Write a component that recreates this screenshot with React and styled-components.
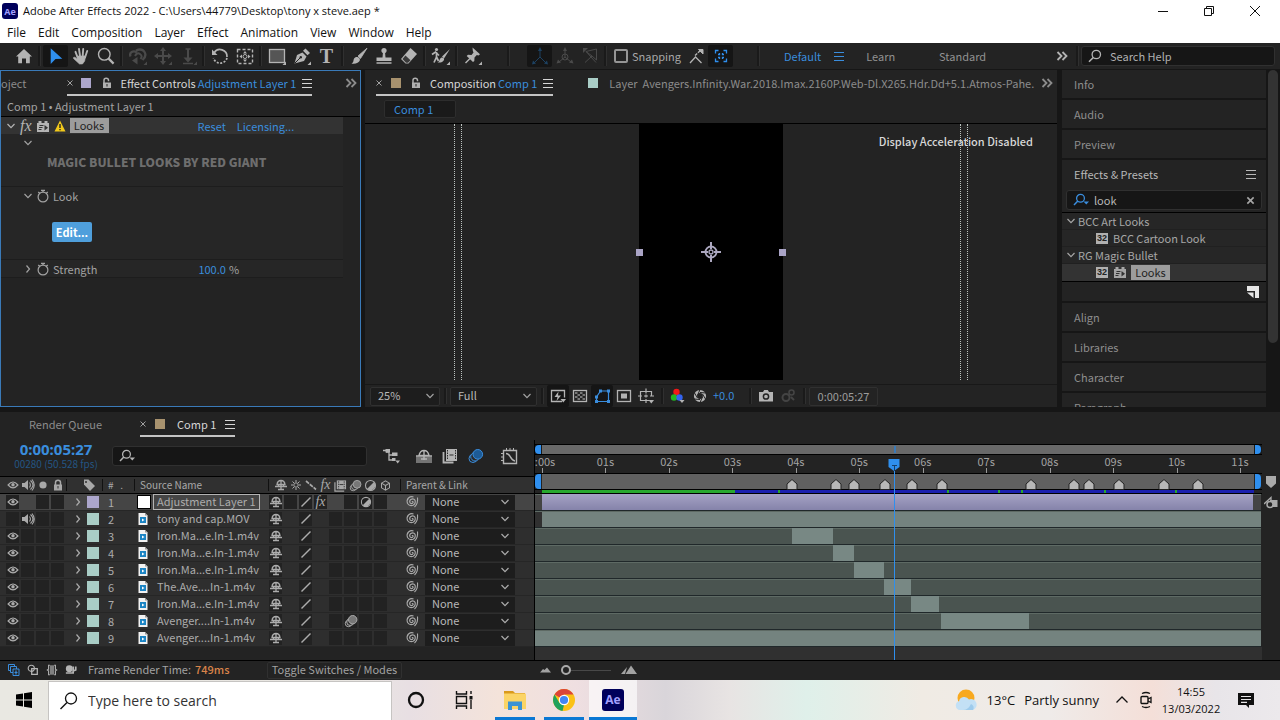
import React from 'react'
import styled, { createGlobalStyle, css } from 'styled-components'

const GlobalStyle = createGlobalStyle`
  * {
    box-sizing: border-box;
  }

  body {
    margin: 0;
    background: #161616;
    color: #a2a2a2;
    font: 11px/16px 'Noto Sans CJK JP', 'Noto Sans', sans-serif;
  }

  button, input, select {
    margin: 0;
    padding: 0;
    border: 0;
    background: none;
    color: inherit;
    font: inherit;
    outline: none;
  }

  svg {
    display: block;
    flex: none;
  }
`

const blue = '#3a8ddd'
const duration = 11.22
const at = seconds => `${(seconds / duration) * 100}%`

/* ---------- icons ---------- */

const corner = <path d="M19 15.5V19h-3.500z" fill="currentColor" stroke="none" />

const glyphs = {
  home: [20, <path d="M10 3 2 10.500h2.200v6.800H8v-4.800h4v4.800h3.800v-6.800H18z" fill="currentColor" stroke="none" />],
  arrow: [20, <path d="M4.700 2.300 16.300 12.700l-6.800.3-4.800 5z" fill="currentColor" stroke="none" />],
  hand: [20, <g strokeLinecap="round"><path d="M6.800 12 4.500 5.800M9 10 8 3M11.700 10l.5-7M14 11.500l2.200-6.500" strokeWidth="1.900" /><path d="M6.500 10h8l-.8 5-2.200 3H8.500L2.500 12.500q-.5-1.500 1.300-1.300L6.500 13z" fill="currentColor" strokeWidth=".6" /></g>],
  zoom: [20, <><circle cx="8.300" cy="8.300" r="5.800" strokeWidth="1.400" /><path d="m12.600 12.600 5 5" strokeWidth="2.200" /></>],
  orbit: [20, <><path d="M2.500 10.500C1 6.500 5 4 9 6.500M8 4.500q6-2.500 8.500 1.500t-2 8" strokeWidth="2.300" /><path d="M7 10q2-4 5-2t.5 5" strokeWidth="2" /><path d="M9.500 11v7.500L4 14.500z" fill="currentColor" stroke="none" />{corner}</>],
  pan: [20, <><path d="M10 3v14M3 10h14" strokeWidth="2" /><path d="m10 1-3 4h6zM10 19l-3-4h6zM1 10l4-3v6zM19 10l-4-3v6z" fill="currentColor" stroke="none" />{corner}</>],
  dolly: [20, <><path d="M10 3v9" strokeWidth="2" /><path d="M7.500 3h5M5 17.500h10" strokeWidth="1.400" /><path d="m10 16.500-4.500-5h9z" fill="currentColor" stroke="none" />{corner}</>],
  rotate: [20, <><path d="M4 7a7 7 0 0 1 13 4" strokeWidth="1.700" /><path d="M17 12a7 7 0 0 1-13.500 0" strokeWidth="1.700" strokeDasharray="2 1.500" /><path d="M2 3.500V9h5.500z" fill="currentColor" stroke="none" /></>],
  anchorTool: [20, <><rect x="2.500" y="3.500" width="15" height="14" strokeDasharray="3 2" strokeWidth="1.400" /><circle cx="10" cy="10.500" r="2" /><path d="m10 5-2 2.500h4zM10 16l-2-2.500h4zM4.500 10.500l2.500-2v4zM15.500 10.500l-2.500-2v4z" fill="currentColor" stroke="none" /></>],
  shape: [20, <><rect x="2.500" y="3.500" width="15" height="13" fill="#555" strokeWidth="1.300" />{corner}</>],
  pen: [20, <><path d="M2.500 17.500 5 9l5.500-2.500 4 4-2.500 4.500z" fill="currentColor" stroke="none" /><path d="m3 17 5-5" stroke="#232323" /><circle cx="8.800" cy="11.300" r="1.200" fill="#232323" stroke="none" /><path d="m11 4.800 2.500-2.300 4.500 4.500-2.500 2.300z" fill="currentColor" stroke="none" />{corner}</>],
  brush: [20, <><path d="M18 2.200 9 10l2.500 2.500z" fill="currentColor" strokeWidth=".8" /><path d="M8.300 11c2 .3 3 1.700 2.500 3.500-.8 2.500-4.500 3.700-8.300 3 2.500-1 1.500-2.500 2.500-4.700.7-1.400 2-2 3.300-1.800z" fill="currentColor" stroke="none" /></>],
  stamp: [20, <><circle cx="10" cy="4.500" r="2.600" fill="currentColor" stroke="none" /><path d="M9 6h2l.5 5.500h6V15h-15v-3.500h6zM2.500 16.300h15v1.500h-15z" fill="currentColor" stroke="none" /></>],
  eraser: [20, <><path d="m11.500 2 6.500 6-8.500 9.500H6.500L2 13z" fill="currentColor" stroke="none" /><path d="m6.500 9.500 5 4.800-2.500 2.500H7L3.500 13z" fill="#3a3a3a" stroke="none" /></>],
  roto: [20, <><circle cx="5.500" cy="3.500" r="1.600" fill="currentColor" stroke="none" /><path d="M1 8.500 4.500 6 8 9.500M5.500 6v5l-2.500 5.500M5.500 11l2 4" strokeWidth="1.700" /><path d="m19 3-8 7.500 2 2zM10.500 11.500q3 0 2.500 2.500-1.500 3-6.500 2.500 1.800-.7 2-2.500 .5-2 2-2.500z" fill="currentColor" stroke="none" />{corner}</>],
  pin: [20, <><path d="m9.500 1.500 7.500 6.800-1.500 1.200-1.700-.4-2.300 2.400-.2 3.500-1.300 1-6.300-6 1.300-1.200 3.500.2 2-2.500-.7-1.800z" fill="currentColor" stroke="none" /><path d="M7 12.500 2.500 17" strokeWidth="1.500" />{corner}</>],
  axisLocal: [20, <><path d="M10 4v7l-6 6M10 11l6 6" /><path d="m10 1-2 4h4zM2 18.500l1-4 3 3zM18 18.500l-1-4-3 3z" fill="currentColor" stroke="none" /></>],
  axisWorld: [20, <><circle cx="10" cy="11" r="3" /><path d="M10 4v7l-6 5M10 11l6 5" /><path d="m10 1-2 4h4zM1.500 17.500l1.500-4 3 3zM18.500 17.500l-1.500-4-3 3z" fill="currentColor" stroke="none" /></>],
  axisView: [20, <><path d="M6 5.500 16.500 3v11L12 10zM6 5.500l10 11M5 16.500l7-6.500" /><path d="M3 2v5l5-5z" fill="currentColor" stroke="none" /></>],
  snapEdge: [20, <><path d="M4 17l5.500-6 6 6" strokeWidth="1.300" /><path d="M9 9.500l6-5.500" strokeWidth="1.400" strokeDasharray="3 1" /><path d="M12.500 3.500H17V8z" fill="currentColor" strokeWidth="1" /></>],
  snapBox: [20, <path d="M4.500 7.500v-3h3M12.500 4.500h3v3M15.500 12.500v3h-3M7.500 15.500h-3v-3M8.500 7v1.500H7M11.500 7v1.500H13M8.500 13v-1.500H7M11.500 13v-1.500H13" strokeWidth="1.300" />],
  menu: [10, <path d="M0 1.500h10M0 5.500h10M0 9.500h10" />],
  more: [12, <path d="m1.500 2 4 4-4 4M6.500 2l4 4-4 4" strokeWidth="1.800" />],
  search: [14, <><circle cx="8.300" cy="5.500" r="4.200" strokeWidth="1.300" /><path d="M5.300 8.500 1 12.800" strokeWidth="1.600" /></>],
  searchMenu: [16, <><circle cx="7.500" cy="6.300" r="3.900" strokeWidth="1.300" /><path d="M4.800 9 1 13" strokeWidth="1.500" /><path d="M10.500 9.500H16l-2.700 3z" fill="currentColor" stroke="none" /></>],
  close: [8, <path d="m.5 1.500 5 5M5.500 1.500l-5 5" stroke="#a0a0a0" />],
  clear: [10, <path d="m1.500 1.500 7 7M8.500 1.500l-7 7" strokeWidth="1.800" />],
  lockOpen: [12, <g stroke="#b0b0b0"><path d="M3 6V3.200q0-2 2.200-2t2.300 2v1" strokeWidth="1.500" /><path d="M2 5.500h8v5.500H2z" fill="#b0b0b0" stroke="none" /><path d="M6 7v2.500" stroke="#232323" /></g>],
  lock: [12, <><path d="M3.500 6V3.500q0-2.300 2.500-2.300t2.500 2.300V6" strokeWidth="1.500" /><path d="M2 5.500h8v6H2z" fill="currentColor" stroke="none" /><path d="M6 7v2.500" stroke="#323232" /></>],
  down: [10, <path d="m1.500 3 3.500 3.700L8.500 3" strokeWidth="1.200" />],
  right: [10, <path d="m3.500 1.500 3 3.500-3 3.500" strokeWidth="1.200" />],
  block: [14, <><path d="M1 4h1.500V2h3v2h3V2h3v2H13v9H1z" fill="currentColor" stroke="none" /><path d="M3.500 6.500h4M3 8.500h3.500M2.500 10.500h3" stroke="#333" /><path d="M8.500 6v5.500L12 8.700z" fill="#333" stroke="none" /></>],
  warn: [12, <><path d="M6 .5 11.500 11.500H.5z" fill="#f2c91b" stroke="none" /><path d="M6 4v4M6 9v1.300" stroke="#222" strokeWidth="1.400" /></>],
  stopwatch: [14, <><circle cx="7" cy="8" r="4.900" strokeWidth="1.200" /><path d="M7 3V1.300M5 1.300h4M2.200 3l1.600 1.300M11.800 3l-1.600 1.300" strokeWidth="1.200" /></>],
  newBin: [14, <><path d="M1 1h12v12H9V6H1z" fill="#e6e6e6" stroke="none" /><path d="M1 7.500h6.500V13z" fill="#e6e6e6" stroke="none" /></>],
  fast: [16, <><path d="M12 13.500H1.500v-11h13v7" strokeWidth="1.300" /><path d="M8.500 3.500 4.500 9h3l-1 4 4.500-5.500H8z" fill="currentColor" stroke="none" /><path d="M10.500 11H16l-2.700 3.500z" fill="currentColor" stroke="none" /></>],
  checker: [16, <><rect x="1.500" y="2.500" width="13" height="11" strokeWidth="1.300" /><path d="M3 4h2.500v2H3zM8 4h2.500v2H8zM5.500 6H8v2H5.500zM10.500 6H13v2h-2.500zM3 8h2.500v2H3zM8 8h2.500v2H8zM5.500 10H8v2H5.500zM10.500 10H13v2h-2.500z" fill="#777" stroke="none" /></>],
  mask: [16, <><path d="M2.500 13.500V9l4-6h8v10.500z" strokeWidth="1.200" /><path d="M1 12h3v3H1zM1 7.500h3v3H1zM5 1.500h3v3H5zM13 1.500h3v3h-3zM13 12h3v3h-3z" fill="currentColor" stroke="none" /></>],
  roi: [16, <><rect x="1.500" y="2.500" width="13" height="11" strokeWidth="1.300" /><path d="M5 5.500h6v5H5z" fill="currentColor" stroke="none" /></>],
  guides: [16, <><path d="M11 12.500H2.500v-9h11V8M8 .5v5M8 11v4M0 8h4M6 8h4M12 8h4M8 6.500v3" strokeWidth="1.200" /><path d="M10.500 12H16l-2.700 3.500z" fill="currentColor" stroke="none" /></>],
  rgb: [16, <><circle cx="6.500" cy="4" r="3.200" fill="#f01818" stroke="none" /><circle cx="4" cy="9.500" r="3.200" fill="#22b422" stroke="none" /><circle cx="9.500" cy="9.500" r="3.200" fill="#3464f0" stroke="none" /><path d="M9.500 12h5L12 15z" fill="currentColor" stroke="none" /></>],
  shutter: [16, <><circle cx="8" cy="8" r="4.500" strokeWidth="3.200" /><path d="m8 1.500-2.500 6M14 5 8 4.500M13.500 11l-3-5M8 14.500l2.500-5.500M2 11l6 .5M2.500 5l3 5" stroke="#232323" /></>],
  camera: [16, <><path d="M1 4h4l1.200-2h3.600L11 4h4v9.500H1z" fill="currentColor" stroke="none" /><circle cx="8" cy="8.500" r="2.600" stroke="#232323" strokeWidth="1.500" /></>],
  ghost: [16, <><circle cx="6" cy="9.500" r="3.500" strokeWidth="2" /><circle cx="11.500" cy="4.500" r="2.500" strokeWidth="1.600" /><path d="M11 9l3 3" strokeWidth="2" /></>],
  flow: [18, <><path d="M1 3.500h4M4 5h3v3h3M7 8v5h3" strokeWidth="1.300" /><path d="M3.500 2H8v3.500H3.500zM10 5.500h5.500V9H10zM10 11h3.500v3H10zM13.500 13.500H18l-2.300 3z" fill="currentColor" stroke="none" /></>],
  shyBig: [18, <><path d="M1 9.500h16V16H1z" fill="#747474" stroke="none" /><path d="M4 8.500q1-5 5-5t5 5zM9 3v10M6 12h6M1 9h16" strokeWidth="1.400" /></>],
  film: [16, <><path d="M1.500 4v10.500h10" strokeWidth="1.800" /><path d="M4 1h11v12H4z" fill="currentColor" stroke="none" /><path d="M5.500 2v10M13.500 2v10" stroke="#2b2b2b" strokeWidth="1" strokeDasharray="1.500 1" /><path d="M7.500 7h4" stroke="#2b2b2b" /></>],
  blur: [16, <><circle cx="5" cy="10.500" r="4" /><circle cx="7" cy="8.700" r="4.300" fill="#2b2b2b" /><circle cx="9.800" cy="6.300" r="4.800" fill="#1d5b96" /></>],
  blurGrey: [14, <><circle cx="4.500" cy="9.500" r="3.200" /><circle cx="6.200" cy="8" r="3.500" fill="#333" /><circle cx="8.700" cy="5.700" r="4.200" fill="#777" /></>],
  graph: [18, <><path d="M2.500 3.500h13v13h-13z" strokeWidth="1.400" /><path d="M5.500 1v2M9 1v2M12.500 1v2M0 6.500h2M0 10h2M0 13.500h2" /><path d="M5 6.500c5 0 4 7 9 7.500" strokeWidth="1.500" /></>],
  eye: [14, <><path d="M1.300 7Q7 0 12.700 7 7 13.500 1.300 7z" strokeWidth="1.400" /><circle cx="7" cy="6.700" r="2" fill="currentColor" stroke="none" /></>],
  speaker: [14, <><path d="M1 5h2.500L7 2v10L3.500 9H1z" fill="currentColor" stroke="none" /><path d="M8.500 4.500q1.800 2.500 0 5M9.500 2.500q5 4.500 0 9M11 1.500q4.500 5.500 0 11" strokeWidth="1.100" /></>],
  dot: [14, <circle cx="7" cy="7" r="3.600" fill="currentColor" stroke="none" />],
  tag: [14, <><path d="M2 1.500h4.500l6.500 6.500-5 5-6-6.500z" fill="currentColor" stroke="none" /><circle cx="4" cy="4" r="1" fill="#323232" stroke="none" /></>],
  shy: [14, <path d="M3 6.500q.5-4 4-4t4 4zM7 2.500V12M4 11.500h6M1 8.500h12M4.500 7v2M9.500 7v2" strokeWidth="1.300" />],
  sun: [14, <><circle cx="7" cy="7" r="2.200" /><path d="M7 2v2M7 10v2M2 7h2M10 7h2M3.500 3.500l1.500 1.500M9 9l1.500 1.500M10.500 3.500 9 5M5 9l-1.500 1.500" /></>],
  slash: [14, <path d="M2.500 11.500 11.500 2.500" strokeWidth="1.400" />],
  backslash: [14, <path d="m2 3 10 8.500" strokeWidth="1.700" strokeDasharray="4 1" />],
  filmSmall: [14, <><path d="M1 3.500v9.500h10" strokeWidth="1.300" /><path d="M3 1.500h10v9.500H3z" fill="currentColor" stroke="none" /><path d="M5 2.500v8M11 2.500v8" stroke="#333" strokeDasharray="1.500 1" /><path d="M6 6h4" stroke="#333" /></>],
  half: [14, <><circle cx="7" cy="7" r="5.400" strokeWidth="1.200" /><path d="M3.200 10.800A5.400 5.400 0 0 0 10.800 3.200z" fill="currentColor" stroke="none" /></>],
  cube: [14, <path d="m7 2 4.300 2.500v5L7 12 2.700 9.500v-5zM7 12V7L2.700 4.500M7 7l4.300-2.500" strokeWidth="1.100" />],
  whip: [14, <path d="M6.800 6.800q1.700-.6 1.200 1-1 1.500-2.700.3-1.500-2 .5-3.700 2.800-1.500 4.300 1 .8 3.200-2 4.800-3.500 1.300-5.600-1.700-1.200-3.200 1-5.500 2.500-2 5-1M12.500 2.500q.8 6-3 9.500" strokeWidth="1.100" />],
  file: [12, <><path d="M1.500 0H8l2.500 2.500V12h-9z" fill="#f2f2f2" stroke="none" /><path d="M8 0v2.500h2.500z" fill="#9a9a9a" stroke="none" /><path d="M3 4h6v6H3z" fill="#1b84c4" stroke="none" /><path d="M5 5.500v3L7.500 7z" fill="#fff" stroke="none" /></>],
  layers: [14, <><path d="M1.500 1.500h6v6h-6z" /><path d="M3.500 3.500h6v6h-6z" fill="#232323" /><path d="M6 6h6v6.500H6z" fill="#232323" /><path d="M9 7.500v4M7.500 9.500h3" strokeWidth="1.200" /></>],
  overlap: [14, <><circle cx="5" cy="5" r="3.600" strokeWidth="1.300" /><path d="M5.500 5.500H12V12H5.500z" strokeWidth="1.500" /></>],
  brackets: [14, <><path d="M4.500 1.500h5v11h-5z" fill="#808080" stroke="none" /><path d="M4.500 1.500H3V6L1.500 7 3 8v4.500h1.500M9.500 1.500H11V6l1.500 1L11 8v4.500H9.500" strokeWidth="1.200" /></>],
  snail: [14, <><circle cx="5" cy="5.500" r="4" fill="currentColor" stroke="none" /><path d="M1 10.500h8.500V3M9.500 8l3-1V3" strokeWidth="2" /></>],
  hillSmall: [12, <path d="M0 8.500 3 5l1.500 1L7 3.500l4 5z" fill="currentColor" stroke="none" />],
  hillBig: [18, <path d="M1 13 7 6 5 13zM5.500 13 11 4.500 17 13z" fill="currentColor" stroke="none" />],
  markerBin: [12, <path d="M1 0h10v7.500L6 12 1 7.500z" fill="currentColor" stroke="none" />],
  compButton: [14, <><path d="M6 4h7.500v7H6z" fill="currentColor" stroke="none" /><circle cx="6" cy="8.500" r="3" fill="#232323" strokeWidth="1.500" /><path d="M0 8 7 1.500V5" strokeWidth="1.300" /></>],
  anchor: [20, <g stroke="#aca8c0"><circle cx="10" cy="10" r="5.500" strokeWidth="1.800" /><path d="M10 0v7M10 13v7M0 10h7M13 10h7" strokeWidth="2" /><circle cx="10" cy="10" r="2" fill="#000" strokeWidth="1.300" /></g>],
  playhead: [12, <><path d="M.5 0h11v8L6 12 .5 8z" fill="#2f8fee" stroke="none" /><path d="M4 6.500h5M6.500 6.500V12" stroke="#16406c" /></>],
  workMarker: [12, <path d="M1 11.500V6l5-4.500L11 6v5.500z" fill="#b8b8b8" stroke="#222" />],
  minimize: [12, <path d="M1 6.500h10" />],
  restore: [12, <path d="M1.500 3.500h7v7h-7zM3.500 3.500v-2h7v7h-2" />],
  windowClose: [12, <path d="m1 1 10 10M11 1 1 11" />],
  windows: [18, <path d="M1 3.500 8 2.500v6H1zM9 2.300 17 1v7.500H9zM1 9.500h7v6L1 14.500zM9 9.500h8V17l-8-1.200z" fill="currentColor" stroke="none" />],
  taskSearch: [20, <><circle cx="12" cy="7.500" r="5.500" strokeWidth="1.300" /><path d="M8 11.500 1.500 18" strokeWidth="1.400" /></>],
  cortana: [18, <circle cx="9" cy="9" r="7" strokeWidth="2.300" />],
  taskView: [20, <><path d="M2.500 1v3h10V1M2.500 19v-3h10v3M2.500 6.500h10v7h-10zM17 1v3M17 10v9" strokeWidth="1.400" /><path d="M15.500 6h3v3.500h-3z" fill="currentColor" stroke="none" /></>],
  folder: [24, <><path d="M1 3h9l2 2h10v4H1z" fill="#d99a1c" stroke="none" /><path d="M1 5.500h21q1 0 1 1V21H1z" fill="#fbd466" stroke="none" /><path d="M5 13.500h14V22h-4v-4H9v4H5z" fill="#3c93d4" stroke="none" /></>],
  chrome: [24, <><circle cx="12" cy="12" r="11" fill="#fbc116" stroke="none" /><path d="M12 12 2.500 6.500A11 11 0 0 1 21.500 6.500H12z" fill="#dc4437" stroke="none" /><path d="M2.500 6.500 7.500 15 12 17l-1.500 5.900A11 11 0 0 1 2.500 6.500z" fill="#1fa15d" stroke="none" /><circle cx="12" cy="12" r="5.200" fill="#fff" stroke="none" /><circle cx="12" cy="12" r="4.100" fill="#4285f4" stroke="none" /></>],
  weather: [24, <><circle cx="12" cy="10" r="8.500" fill="#f8a91f" stroke="none" /><path d="M6 22a4.500 4.500 0 0 1-1-8.800 5.500 5.500 0 0 1 10-1.700 5 5 0 0 1 4 10.500z" fill="#c3e0f5" stroke="none" /><path d="M9 22q5 0 8-6a4 4 0 0 1 2 6z" fill="#9ecbec" stroke="none" /></>],
  up: [14, <path d="m1.500 9.500 5.500-5.500 5.500 5.500" strokeWidth="1.300" />],
  meet: [18, <><rect x="4" y="5.500" width="7" height="7" rx="1" strokeWidth="1.400" /><path d="m11 8 3-1.500v5L11 10M5 2.500q4-2 8 0M5 15.500q4 2 8 0" strokeWidth="1.300" /></>],
  notice: [18, <><path d="M1 2h16v12h-5v3l-3-3H1z" fill="currentColor" stroke="none" /><path d="M4 5.500h10M4 8.500h10M4 11.300h6" stroke="#e8e6e8" strokeWidth="1.200" /></>],
}

const Icon = ({ name, size }) => {
  const [box, drawing] = glyphs[name]
  return (
    <svg width={size || box} height={size || box} viewBox={`0 0 ${box} ${box}`} fill="none" stroke="currentColor" aria-hidden="true">
      {drawing}
    </svg>
  )
}

/* ---------- shell ---------- */

const App = styled.div`
  height: 100vh;
  min-height: 600px;
  display: flex;
  flex-direction: column;
  overflow: hidden;
`

const Windows = styled.div`
  background: #fff;
  color: #111;
  font-family: 'Open Sans', sans-serif;
  font-size: 12px;
`

const TitleBar = styled.header`
  height: 22px;
  padding: 0 2px;
  display: flex;
  align-items: center;
  font-size: 11px;
`

const AeLogo = styled.span`
  width: ${p => p.$size}px;
  height: ${p => p.$size}px;
  border-radius: 3px;
  background: #00005b;
  color: #a3a0ff;
  font: bold ${p => (p.$size > 16 ? 12 : 9)}px/1 'Open Sans', sans-serif;
  display: flex;
  align-items: center;
  justify-content: center;
`

const WindowTitle = styled.span`
  flex: 1;
  margin-left: 5px;
`

const WindowButton = styled.button`
  width: 46px;
  height: 22px;
  display: flex;
  align-items: center;
  justify-content: center;
`

const MenuBar = styled.nav`
  height: 21px;
  padding-left: 7px;
  display: flex;
  align-items: center;
  gap: 12px;
`

const Toolbar = styled.div`
  height: 27px;
  flex: none;
  padding-left: 11px;
  background: #232323;
  border-bottom: 1px solid #161616;
  display: flex;
  align-items: center;
  color: #a8a8a8;
`

const Tool = styled.button`
  width: ${p => p.$width || 25}px;
  height: 22px;
  flex: none;
  display: flex;
  align-items: center;
  justify-content: center;
  border-radius: 2px;
  color: ${p => p.$color || '#b4b4b4'};
  background: ${p => (p.$active ? '#151515' : 'none')};
`

const Letter = styled.span`
  font: bold 20px/20px 'Liberation Serif', serif;
`

const Divider = styled.span`
  width: ${p => p.$width || 7}px;
  height: ${p => p.$height || 20}px;
  flex: none;
  display: flex;
  justify-content: center;

  &::before {
    content: '';
    width: 2px;
    background: #1a1a1a;
    border-right: 1px solid #303030;
  }
`

const Space = styled.span`
  flex: ${p => (p.$width ? `0 0 ${p.$width}px` : 1)};
`

const SnapLabel = styled.label`
  display: flex;
  align-items: center;
  gap: 4px;
  margin: 0 2px 0 5px;
`

const Checkbox = styled.input`
  appearance: none;
  width: 14px;
  height: 14px;
  border: 2px solid #959595;
  border-radius: 2px;
`

const WorkspaceLink = styled.button`
  color: ${p => (p.$active ? blue : '#929292')};
`

const SearchBox = styled.label`
  height: 20px;
  padding: 0 6px;
  display: flex;
  align-items: center;
  gap: ${p => p.$gap || 5}px;
  background: #161616;
  border: 1px solid #303030;
  border-radius: 3px;
  color: #b4b4b4;

  input {
    flex: 1;
    min-width: 0;
    color: #b8b8b8;
  }

  input::placeholder {
    color: #b0b0b0;
    opacity: 1;
  }
`

const HelpSearch = styled(SearchBox)`
  width: 194px;
  margin-right: 5px;
`

const Workspace = styled.main`
  flex: 1;
  min-height: 0;
  display: flex;
  gap: 4px;
  margin-bottom: 5px;
`

const Panel = styled.section`
  background: #232323;
  display: flex;
  flex-direction: column;
  min-width: 0;
  min-height: 0;
`

/* ---------- tabs ---------- */

const Tabs = styled.div`
  height: ${p => p.$height}px;
  flex: none;
  display: flex;
  align-items: flex-end;
  padding-bottom: ${p => p.$bottom || 1}px;
  overflow: hidden;
  white-space: nowrap;
`

const Tab = styled.div`
  height: 25px;
  flex: none;
  display: flex;
  align-items: center;
  gap: ${p => p.$gap || 0}px;
  padding-top: 1px;
  color: ${p => (p.$active ? '#d6d6d6' : '#8c8c8c')};
  border-bottom: 2px solid ${p => (p.$active ? '#c4c4c4' : 'transparent')};
`

const TabLink = styled.span`
  color: ${blue};
  margin: 0 6px 0 2px;
`

const Swatch = styled.span`
  width: ${p => p.$size || 10}px;
  height: ${p => p.$size || 10}px;
  flex: none;
  background: ${p => p.$color};
`

const PlainButton = styled.button`
  display: flex;
  color: ${p => p.$color || '#a6a6a6'};
`

/* ---------- effect controls ---------- */

const EffectPanel = styled(Panel)`
  width: 361px;
  border: 1px solid #3a7ab8;
`

const Crumb = styled.div`
  height: 20px;
  padding: 1px 0 0 6px;
  border-bottom: 1px solid #000;
`

const EffectBody = styled.div`
  margin-right: 17px;
`

const EffectHead = styled.div`
  height: 17px;
  padding-left: 5px;
  display: flex;
  align-items: center;
  gap: 4px;
  background: #333;
  color: #b4b4b4;
`

const Fx = styled.span`
  font: italic ${p => p.$size || 16}px/14px 'Liberation Serif', serif;
`

const Highlight = styled.span`
  width: 39px;
  height: 15px;
  text-align: center;
  line-height: 14px;
  background: #9c9c9c;
  color: #222;
`

const LinkButton = styled.button`
  color: ${blue};
`

const PropBlock = styled.div`
  min-height: ${p => p.$height}px;
  padding-left: 22px;
  border-bottom: 1px solid #1d1d1d;
  background: #262626;
`

const PropRow = styled.div`
  height: 17px;
  display: flex;
  align-items: center;
  gap: 3px;
`

const Brand = styled.h2`
  margin: 1px 0 0 24px;
  font-size: 12px;
  line-height: 20px;
  font-weight: 900;
  color: #6e6e6e;
  text-transform: uppercase;
`

const EditButton = styled.button`
  margin: 18px 0 0 29px;
  height: 20px;
  width: 40px;
  border-radius: 2px;
  background: #4f9fdc;
  color: #fff;
  font-weight: bold;
`

/* ---------- composition ---------- */

const CompPanel = styled(Panel)`
  flex: 1;
`

const CompCrumb = styled.div`
  height: 27px;
  padding: 3px 0 0 19px;
  border-bottom: 1px solid #000;

  button {
    display: block;
    height: 18px;
    width: 72px;
    padding-left: 9px;
    text-align: left;
    line-height: 14px;
    background: #1a1a1a;
    border: 1px solid #2d2d2d;
    border-radius: 2px;
    color: ${blue};
  }
`

const Viewer = styled.div`
  flex: 1;
  position: relative;
  display: flex;
  justify-content: center;
  padding-bottom: 4px;
  border-bottom: 1px solid #181818;
`

const Frame = styled.div`
  width: 144px;
  background: #000;
  position: relative;
  display: flex;
  align-items: center;
  justify-content: center;
`

const Handle = styled.i`
  position: absolute;
  top: calc(50% - 3px);
  ${p => p.$side}: -3px;
  width: 7px;
  height: 7px;
  background: #aaa4c6;
`

const Guide = styled.i`
  position: absolute;
  top: 0;
  bottom: 4px;
  left: calc(50% + ${p => p.$x}px);
  border-left: 1px dotted #bcc4c0;
`

const ViewerNote = styled.strong`
  position: absolute;
  top: 9px;
  right: 24px;
  color: #d8d8d8;
  font-weight: 500;
`

const ViewerBar = styled.div`
  height: 22px;
  flex: none;
  padding-left: 5px;
  display: flex;
  align-items: center;
`

const SelectBox = styled.span`
  position: relative;
  display: flex;
  align-items: center;
  width: ${p => p.$width}px;
  height: ${p => p.$height || 19}px;
  background: #1d1d1d;
  ${p => p.$framed && css`
    border: 1px solid #303030;
    border-radius: 2px;
  `}

  select {
    appearance: none;
    flex: 1;
    height: 100%;
    padding: 0 0 2px 7px;
    line-height: 13px;
    color: #b8b8b8;
  }

  svg {
    position: absolute;
    right: ${p => (p.$framed ? 4 : 5)}px;
    pointer-events: none;
  }
`

const Exposure = styled.button`
  width: 34px;
  padding: 0 0 2px 2px;
  text-align: left;
  color: ${blue};
`

const TimeField = styled.button`
  width: 69px;
  height: 19px;
  padding-bottom: 2px;
  border: 1px solid #303030;
  border-radius: 2px;
  color: #9c9c9c;
`

/* ---------- side panel ---------- */

const Side = styled.aside`
  width: 219px;
  display: flex;
  overflow: hidden;
`

const SideList = styled.div`
  flex: 1;
  margin-left: 1px;
`

const SideRow = styled.div`
  height: ${p => (p.$open ? 28 : 30)}px;
  padding: 0 10px 1px 12px;
  display: flex;
  align-items: center;
  justify-content: space-between;
  background: #232323;
  border-bottom: ${p => (p.$open ? 0 : 2)}px solid #161616;
  color: ${p => (p.$open ? '#b8b8b8' : '#8e8e8e')};
`

const Presets = styled.div`
  background: #232323;
  border-bottom: 2px solid #161616;

  ${SearchBox} {
    margin: 2px 4px;
  }
`

const Tree = styled.div`
  border: solid #000;
  border-width: 1px 0;
`

const TreeRow = styled.div`
  height: 17px;
  padding-left: ${p => (p.$leaf ? 33 : 4)}px;
  display: flex;
  align-items: center;
  gap: ${p => (p.$leaf ? 4 : 2)}px;
  line-height: 14px;
  background: ${p => (p.$selected ? '#333' : '#262626')};
  border-bottom: 1px solid ${p => (p.$selected ? '#333' : '#202020')};
  color: #a6a6a6;
`

const Bits = styled.span`
  width: 12px;
  height: 11px;
  margin: 0 1px;
  font: bold 9px/11px 'Liberation Sans', sans-serif;
  text-align: center;
  background: #b0b0b0;
  color: #222;
`

const TreeFoot = styled.div`
  height: 19px;
  padding-right: 6px;
  display: flex;
  align-items: center;
  justify-content: flex-end;
`

const Scrollbar = styled.div`
  width: 14px;
  padding-left: 2px;

  &::before {
    content: '';
    display: block;
    width: 10px;
    height: 81%;
    background: #333;
    border-radius: 5px;
  }
`

/* ---------- timeline ---------- */

const Timeline = styled(Panel)`
  flex: none;
`

const TimelineBody = styled.div`
  display: flex;
`

const LayerSide = styled.div`
  width: 535px;
  flex: none;
  border-right: 1px solid #000;
`

const TimeHead = styled.div`
  height: 36px;
  display: flex;
  align-items: center;
  padding-bottom: 4px;
`

const Clock = styled.div`
  width: 112px;
  text-align: center;
  color: ${blue};

  strong {
    display: block;
    font: bold 15px/16px 'Noto Sans', sans-serif;
  }

  small {
    display: block;
    font-size: 10px;
    line-height: 14px;
    color: #235582;
  }
`

const LayerSearch = styled(SearchBox)`
  width: 255px;
  margin-right: 11px;
`

const LayerTable = styled.table`
  display: block;
  border-collapse: collapse;

  thead, tbody {
    display: block;
  }

  th, td {
    padding: 0;
    font-weight: normal;
    text-align: left;
    display: flex;
    align-items: center;
  }
`

const layerColumns = '60px 20px 16px 32px 134px 120px 37px 1fr'

const HeadRow = styled.tr`
  display: grid;
  grid-template-columns: 60px 36px 32px 134px 132px 1fr;
  height: 18px;
  padding-left: 6px;
  background: #303030;
  border: solid #000;
  border-width: 1px 0;
  font-size: 10px;
  color: #a8a8a8;

  th + th {
    border-left: 1px solid #111;
    padding-left: 5px;
    height: 12px;
    margin-top: 2px;
  }
`

const LayerRow = styled.tr`
  display: grid;
  grid-template-columns: ${layerColumns};
  height: 17px;
  padding-left: 6px;
  line-height: 14px;
  background: ${p => (p.$selected ? '#454545' : '#2e2e2e')};
  border-bottom: 1px solid #262626;
  color: #acacac;
`

const Cell = styled.span`
  width: 13px;
  height: 14px;
  margin-right: 2px;
  flex: none;
  display: flex;
  align-items: center;
  justify-content: center;
  background: ${p => (p.$dark ? '#222' : 'none')};
`

const SourceName = styled.span`
  height: 16px;
  padding: 0 3px;
  line-height: 13px;
  border: 1px solid ${p => (p.$selected ? '#b4b4b4' : 'transparent')};
  white-space: nowrap;
`

const Solid = styled.i`
  width: 14px;
  height: 14px;
  background: #fff;
  border: 1px solid #000;
`

const Thumb = styled.span`
  width: 16px;
  flex: none;
  display: flex;
  margin-left: 3px;
`

const Tracks = styled.div`
  flex: 1;
  min-width: 0;
  position: relative;
  padding-top: 4px;
  overflow: hidden;
  background: #232323;
`

const Strip = styled.div`
  height: ${p => p.$height}px;
  padding: 0 8px 0 7px;
  background: ${p => p.$color || 'none'};
  border-top: 1px solid #000;
`

const Span = styled.div`
  height: 100%;
  position: relative;
  background: ${p => p.$color || 'none'};
`

const End = styled.i`
  position: absolute;
  top: 0;
  bottom: 0;
  width: 6px;
  background: #2f8fee;
  ${p => (p.$left ? 'right: calc(100% + 1px)' : 'left: calc(100% + 1px)')};
  border-radius: ${p => (p.$left ? '4px 0 0 4px' : '0 4px 4px 0')};
`

const NavMark = styled.i`
  position: absolute;
  top: 1px;
  bottom: 1px;
  width: 2px;
  background: #3a7ab8;
`

const Tick = styled.span`
  position: absolute;
  bottom: 0;
  width: 40px;
  margin-left: -20px;
  height: 18px;
  text-align: center;
  line-height: 13px;

  &::after {
    content: '';
    position: absolute;
    left: 20px;
    bottom: 0;
    width: 1px;
    height: 5px;
    background: #9a9a9a;
  }
`

const Marker = styled.span`
  position: absolute;
  bottom: -1px;
  margin-left: -6px;
`

const Cached = styled.i`
  position: absolute;
  top: 0;
  bottom: 0;
  min-width: 2px;
  background: #28a82e;
`

const Lane = styled.div`
  height: 17px;
  padding: 0 8px 0 7px;
  margin-right: 1px;
  border-bottom: 1px solid #20282a;
  background: ${p => p.$color};
  box-shadow: inset 0 1px #5e6a64;
`

const Clip = styled.i`
  position: absolute;
  top: 0;
  bottom: 0;
  background: ${p => p.$fill};
`

const Remainder = styled.div`
  height: 13px;
  background: ${p => p.$color};
`

const PlayheadLayer = styled.div`
  position: absolute;
  inset: 19px 8px 0 7px;
  pointer-events: none;
`

const Playhead = styled.div`
  position: absolute;
  top: 0;
  bottom: 0;
  width: 12px;
  margin-left: -6px;

  &::after {
    content: '';
    position: absolute;
    left: 6px;
    top: 12px;
    bottom: 0;
    width: 1px;
    background: #2f8fee;
  }
`

const Gutter = styled.div`
  width: 18px;
  padding-top: 36px;
  display: flex;
  flex-direction: column;
  align-items: center;
  gap: 8px;
  color: #aaa;
`

const TimelineFoot = styled.div`
  height: 20px;
  padding: 0 0 1px 4px;
  display: flex;
  align-items: center;
  border-top: 1px solid #000;
`

const RenderTime = styled.span`
  margin-left: 8px;
  padding-bottom: 2px;
  width: 179px;

  b {
    margin-left: 4px;
    font-weight: 500;
    color: #d9834a;
  }
`

const ToggleButton = styled.button`
  width: 135px;
  height: 17px;
  line-height: 13px;
  padding-bottom: 2px;
  white-space: nowrap;
  border: 1px solid #303030;
  border-radius: 2px;
  margin-right: 138px;
`

const ZoomSlider = styled.input`
  appearance: none;
  width: 50px;
  height: 12px;
  margin: 0 9px;
  background: linear-gradient(#484848, #484848) center / 100% 1px no-repeat;

  &::-webkit-slider-thumb {
    appearance: none;
    width: 10px;
    height: 10px;
    border: 2px solid #aaa;
    border-radius: 50%;
    background: #232323;
  }
`

/* ---------- taskbar ---------- */

const Taskbar = styled.footer`
  height: 40px;
  flex: none;
  display: flex;
  align-items: center;
  font-family: 'Open Sans', sans-serif;
  color: #111;
  background: linear-gradient(90deg, #e9e8e2 0%, #e9e6e2 28%, #e8dfe3 32%, #f4e3da 39%, #efdfe1 45%, #d9d5da 52%, #e8e4e3 57%, #dff0ea 63%, #f0ebe4 72%, #efebe9 82%, #f4dfd8 90%, #e8e5e9 95%, #ece9ec 100%);
`

const StartButton = styled.button`
  width: 48px;
  height: 40px;
  display: flex;
  align-items: center;
  justify-content: center;
  color: #000;
`

const TaskSearch = styled.label`
  width: 344px;
  height: 39px;
  display: flex;
  align-items: center;
  gap: 9px;
  padding-left: 10px;
  background: #fff;
  border: 1px solid #c6c4c2;
  border-bottom: 0;
  font-size: 14px;

  input {
    flex: 1;
  }

  input::placeholder {
    color: #333;
    opacity: 1;
  }
`

const TaskButton = styled.button`
  width: ${p => (p.$running ? 40 : 48)}px;
  height: 40px;
  margin: 0 ${p => (p.$running ? 5 : 0)}px 0 ${p => (p.$running ? 4 : 0)}px;
  display: flex;
  align-items: center;
  justify-content: center;
  color: #111;
  box-shadow: ${p => (p.$running || p.$current ? 'inset 0 -3px #0a78d4' : 'none')};
  background: ${p => (p.$current ? 'rgba(255, 255, 255, .65)' : 'none')};
`

const Weather = styled.button`
  display: flex;
  align-items: center;
  gap: 9px;
  font-size: 13px;
  white-space: nowrap;
`

const TrayButton = styled.button`
  width: ${p => p.$width || 24}px;
  height: 40px;
  display: flex;
  align-items: center;
  justify-content: center;
`

const DateTime = styled.time`
  width: 66px;
  text-align: center;
  font-size: 11px;
  line-height: 17px;
`

/* ---------- data ---------- */

const menus = ['File', 'Edit', 'Composition', 'Layer', 'Effect', 'Animation', 'View', 'Window', 'Help']

const toolGroups = [
  ['home'],
  ['arrow', 'hand', 'zoom'],
  ['orbit', 'pan', 'dolly'],
  ['rotate', 'anchorTool'],
  ['shape', 'pen', 'type'],
  ['brush', 'stamp', 'eraser'],
  ['roto'],
  ['pin'],
]

const dimTools = ['orbit', 'pan', 'dolly']

const layers = [
  { name: 'Adjustment Layer 1', adjustment: true },
  { name: 'tony and cap.MOV', audio: true, full: true },
  { name: 'Iron.Ma...e.In-1.m4v', clip: [3.94, 4.6] },
  { name: 'Iron.Ma...e.In-1.m4v', clip: [4.59, 4.93] },
  { name: 'Iron.Ma...e.In-1.m4v', clip: [4.93, 5.39] },
  { name: 'The.Ave....In-1.m4v', clip: [5.39, 5.82] },
  { name: 'Iron.Ma...e.In-1.m4v', clip: [5.83, 6.27] },
  { name: 'Avenger....In-1.m4v', clip: [6.29, 7.68], blurred: true },
  { name: 'Avenger....In-1.m4v', full: true },
]

const seconds = ['0:00s', '01s', '02s', '03s', '04s', '05s', '06s', '07s', '08s', '09s', '10s', '11s']
const markers = [3.945, 4.626, 4.91, 5.41, 5.836, 6.296, 7.7, 8.376, 8.613, 9.086, 9.807, 10.33]
const cached = [3.72, 6.38, 7.18, 7.55, 8.86, 9.97]
const now = 5.547

/* ---------- parts ---------- */

const MainTools = () => (
  <Toolbar>
    {toolGroups.map((group, i) => (
      <React.Fragment key={i}>
        {i > 0 && <Divider />}
        {group.map(name => (
          <Tool
            key={name}
            aria-label={name}
            $active={name === 'arrow'}
            $color={name === 'arrow' ? '#2f8fee' : dimTools.includes(name) ? '#4a4a4a' : undefined}
          >
            {name === 'type' ? <Letter>T</Letter> : <Icon name={name} />}
          </Tool>
        ))}
      </React.Fragment>
    ))}
    <Space $width={20} />
    <Divider />
    <Space $width={15} />
    <Tool $active $color="#1d4161" aria-label="Local axis"><Icon name="axisLocal" /></Tool>
    <Tool $color="#4a4a4a" aria-label="World axis"><Icon name="axisWorld" /></Tool>
    <Tool $color="#4a4a4a" aria-label="View axis"><Icon name="axisView" /></Tool>
    <Divider />
    <SnapLabel>
      <Checkbox type="checkbox" />
      Snapping
    </SnapLabel>
    <Tool aria-label="Snap edges"><Icon name="snapEdge" /></Tool>
    <Tool $active $color="#2f8fee" aria-label="Snap box"><Icon name="snapBox" /></Tool>
    <Space $width={22} />
    <Divider />
    <Space $width={22} />
    <WorkspaceLink $active>Default</WorkspaceLink>
    <Space $width={13} />
    <Tool $width={10} $color={blue} aria-label="Workspace menu"><Icon name="menu" /></Tool>
    <Space $width={22} />
    <WorkspaceLink>Learn</WorkspaceLink>
    <Space $width={44} />
    <WorkspaceLink>Standard</WorkspaceLink>
    <Space />
    <Tool aria-label="More workspaces"><Icon name="more" /></Tool>
    <Divider />
    <HelpSearch $gap={8}>
      <Icon name="search" />
      <input placeholder="Search Help" aria-label="Search Help" />
    </HelpSearch>
  </Toolbar>
)

const EffectControls = () => (
  <EffectPanel>
    <Tabs $height={26}>
      <Tab>oject</Tab>
      <Space $width={41} />
      <Tab $active>
        <Icon name="close" />
        <Space $width={6} />
        <Swatch $color="#aca6cc" />
        <Space $width={10} />
        <Icon name="lockOpen" />
        <Space $width={7} />
        Effect Controls
        <TabLink>Adjustment Layer 1</TabLink>
        <Icon name="menu" />
      </Tab>
      <Space />
      <Tab><Icon name="more" /></Tab>
      <Space $width={3} />
    </Tabs>
    <Crumb>Comp 1 • Adjustment Layer 1</Crumb>
    <EffectBody>
      <EffectHead>
        <Icon name="down" />
        <Fx>fx</Fx>
        <Icon name="block" />
        <Icon name="warn" />
        <Highlight>Looks</Highlight>
        <Space $width={81} />
        <LinkButton>Reset</LinkButton>
        <Space $width={3} />
        <LinkButton>Licensing...</LinkButton>
      </EffectHead>
      <PropBlock $height={53}>
        <PropRow><Icon name="down" /></PropRow>
        <Brand>Magic Bullet Looks by Red Giant</Brand>
      </PropBlock>
      <PropBlock $height={73}>
        <PropRow>
          <Icon name="down" />
          <Icon name="stopwatch" />
          Look
        </PropRow>
        <EditButton>Edit...</EditButton>
      </PropBlock>
      <PropBlock $height={17}>
        <PropRow>
          <Icon name="right" />
          <Icon name="stopwatch" />
          Strength
          <Space $width={95} />
          <LinkButton>100.0</LinkButton>%
        </PropRow>
      </PropBlock>
    </EffectBody>
  </EffectPanel>
)

const Composition = () => (
  <CompPanel>
    <Tabs $height={27}>
      <Space $width={11} />
      <Tab $active>
        <Icon name="close" />
        <Space $width={7} />
        <Swatch $color="#a8926e" />
        <Space $width={9} />
        <Icon name="lockOpen" />
        <Space $width={8} />
        Composition
        <TabLink>Comp 1</TabLink>
        <Icon name="menu" />
      </Tab>
      <Space $width={35} />
      <Tab $gap={5}>
        <Swatch $color="#a9cdc6" />
        <Space $width={1} />
        <span>Layer</span>
        <span>Avengers.Infinity.War.2018.Imax.2160P.Web-Dl.X265.Hdr.Dd+5.1.Atmos-Pahe.</span>
      </Tab>
      <Space />
      <Tab><Icon name="more" /></Tab>
      <Space $width={4} />
    </Tabs>
    <CompCrumb><button>Comp 1</button></CompCrumb>
    <Viewer>
      {[-257, -250, 249, 256].map(x => <Guide key={x} $x={x} />)}
      <Frame>
        <Handle $side="left" />
        <Icon name="anchor" />
        <Handle $side="right" />
      </Frame>
      <ViewerNote>Display Acceleration Disabled</ViewerNote>
    </Viewer>
    <ViewerBar>
      <SelectBox $width={70} $framed>
        <select aria-label="Magnification"><option>25%</option></select>
        <Icon name="down" />
      </SelectBox>
      <Divider $width={10} $height={16} />
      <SelectBox $width={87} $framed>
        <select aria-label="Resolution"><option>Full</option></select>
        <Icon name="down" />
      </SelectBox>
      <Divider $width={10} $height={16} />
      <Tool $width={22} $active aria-label="Fast previews"><Icon name="fast" /></Tool>
      <Tool $width={22} aria-label="Transparency grid"><Icon name="checker" /></Tool>
      <Tool $width={22} $active $color={blue} aria-label="Mask paths"><Icon name="mask" /></Tool>
      <Tool $width={22} aria-label="Region of interest"><Icon name="roi" /></Tool>
      <Tool $width={22} aria-label="Guides"><Icon name="guides" /></Tool>
      <Divider $width={10} $height={16} />
      <Tool $width={22} aria-label="Channels"><Icon name="rgb" /></Tool>
      <Tool $width={22} aria-label="Reset exposure"><Icon name="shutter" /></Tool>
      <Exposure>+0.0</Exposure>
      <Divider $width={10} $height={16} />
      <Tool $width={22} aria-label="Snapshot"><Icon name="camera" /></Tool>
      <Tool $width={22} $color="#444" aria-label="Show snapshot"><Icon name="ghost" /></Tool>
      <Divider $width={10} $height={16} />
      <TimeField>0:00:05:27</TimeField>
    </ViewerBar>
  </CompPanel>
)

const SidePanels = () => (
  <Side>
    <SideList>
      <SideRow>Info</SideRow>
      <SideRow>Audio</SideRow>
      <SideRow>Preview</SideRow>
      <Presets>
        <SideRow $open>
          Effects &amp; Presets
          <Icon name="menu" />
        </SideRow>
        <SearchBox>
          <PlainButton $color={blue} aria-label="Search options"><Icon name="searchMenu" /></PlainButton>
          <input defaultValue="look" aria-label="Search effects" />
          <PlainButton aria-label="Clear search"><Icon name="clear" size={9} /></PlainButton>
        </SearchBox>
        <Tree>
          <TreeRow><Icon name="down" />BCC Art Looks</TreeRow>
          <TreeRow $leaf><Bits>32</Bits>BCC Cartoon Look</TreeRow>
          <TreeRow><Icon name="down" />RG Magic Bullet</TreeRow>
          <TreeRow $leaf $selected><Bits>32</Bits><Icon name="block" /><Highlight>Looks</Highlight></TreeRow>
        </Tree>
        <TreeFoot><PlainButton aria-label="New bin"><Icon name="newBin" /></PlainButton></TreeFoot>
      </Presets>
      <SideRow>Align</SideRow>
      <SideRow>Libraries</SideRow>
      <SideRow>Character</SideRow>
      <SideRow>Paragraph</SideRow>
    </SideList>
    <Scrollbar />
  </Side>
)

const Layer = ({ layer, index }) => {
  const adj = layer.adjustment
  return (
    <LayerRow $selected={adj}>
      <td>
        <Cell $dark>{!layer.audio && <Icon name="eye" size={12} />}</Cell>
        <Cell $dark={!adj}>{layer.audio && <Icon name="speaker" />}</Cell>
        <Cell $dark />
        <Cell $dark />
      </td>
      <td><Space $width={7} /><Icon name="right" /></td>
      <td><Space $width={1} /><Swatch $size={12} $color={adj ? '#aca6cc' : '#a9cdc6'} /></td>
      <td><Space $width={6} />{index + 1}</td>
      <td>
        <Thumb>{adj ? <Solid /> : <Icon name="file" />}</Thumb>
        <SourceName $selected={adj}>{layer.name}</SourceName>
      </td>
      <td>
        <Space $width={1} />
        <Cell $dark><Icon name="shy" /></Cell>
        <Cell $dark={adj} />
        <Cell $dark><Icon name="slash" /></Cell>
        <Cell $dark={adj}>{adj && <Fx $size={14}>fx</Fx>}</Cell>
        <Cell $dark={!adj} />
        <Cell $dark>{layer.blurred && <Icon name="blurGrey" />}</Cell>
        <Cell $dark>{adj && <Icon name="half" size={12} />}</Cell>
        <Cell $dark />
      </td>
      <td><Space $width={17} /><Icon name="whip" /></td>
      <td>
        <SelectBox $width={90} $height={15}>
          <select aria-label={`Parent of layer ${index + 1}`}><option>None</option></select>
          <Icon name="down" />
        </SelectBox>
      </td>
    </LayerRow>
  )
}

const Layers = () => (
  <LayerSide>
    <TimeHead>
      <Clock>
        <strong>0:00:05:27</strong>
        <small>00280 (50.528 fps)</small>
      </Clock>
      <LayerSearch>
        <Icon name="searchMenu" />
        <input aria-label="Search layers" />
      </LayerSearch>
      <Tool $width={26} aria-label="Flowchart"><Icon name="flow" /></Tool>
      <Space $width={7} />
      <Tool $width={26} aria-label="Hide shy layers"><Icon name="shyBig" /></Tool>
      <Tool $width={26} aria-label="Frame blending"><Icon name="film" /></Tool>
      <Tool $width={26} $color={blue} aria-label="Motion blur"><Icon name="blur" /></Tool>
      <Space $width={8} />
      <Tool $width={26} aria-label="Graph editor"><Icon name="graph" /></Tool>
    </TimeHead>
    <LayerTable>
      <thead>
        <HeadRow>
          <th>
            <Cell><Icon name="eye" size={12} /></Cell>
            <Cell><Icon name="speaker" /></Cell>
            <Cell><Icon name="dot" /></Cell>
            <Cell><Icon name="lock" /></Cell>
          </th>
          <th><Space $width={10} /><Icon name="tag" /></th>
          <th># &nbsp; .</th>
          <th>Source Name</th>
          <th>
            {['shy', 'sun', 'backslash'].map(name => <Cell key={name}><Icon name={name} /></Cell>)}
            <Cell><Fx $size={14}>fx</Fx></Cell>
            {['filmSmall', 'blurGrey', 'half', 'cube'].map(name => <Cell key={name}><Icon name={name} size={13} /></Cell>)}
          </th>
          <th>Parent &amp; Link</th>
        </HeadRow>
      </thead>
      <tbody>
        {layers.map((layer, i) => <Layer key={i} layer={layer} index={i} />)}
      </tbody>
    </LayerTable>
    <Remainder $color="#232323" />
  </LayerSide>
)

const laneColor = layer => {
  if (layer.adjustment) return '#444'
  if (layer.audio) return 'linear-gradient(90deg, #303030 7px, #74837f 7px)'
  return layer.full ? '#74837f' : '#4a5450'
}

const TimeTracks = () => (
  <Tracks>
    <Strip $height={10} $color="#1a1a1a">
      <Span $color="#696969">
        <End $left />
        <NavMark style={{ left: at(now) }} />
        <End />
      </Span>
    </Strip>
    <Strip $height={19}>
      <Span>
        {seconds.map((label, i) => <Tick key={label} style={{ left: at(i) }}>{label}</Tick>)}
      </Span>
    </Strip>
    <Strip $height={16}>
      <Span $color="#606060">
        <End $left />
        {markers.map(m => <Marker key={m} style={{ left: at(m) }}><Icon name="workMarker" /></Marker>)}
        <End />
      </Span>
    </Strip>
    <Strip $height={4}>
      <Span $color="#1a1fae">
        <Cached style={{ left: 0, width: at(3.04) }} />
        {cached.map(c => <Cached key={c} style={{ left: at(c) }} />)}
      </Span>
    </Strip>
    <Strip $height={1} />
    {layers.map((layer, i) => (
      <Lane key={i} $color={laneColor(layer)}>
        <Span>
          {layer.adjustment && <Clip $fill="linear-gradient(#a5a2c4, #8583aa)" style={{ left: 0, width: '100%' }} />}
          {layer.clip && <Clip $fill="#788884" style={{ left: at(layer.clip[0]), width: at(layer.clip[1] - layer.clip[0]) }} />}
        </Span>
      </Lane>
    ))}
    <Remainder $color="#303030" />
    <PlayheadLayer>
      <Playhead style={{ left: at(now) }}><Icon name="playhead" /></Playhead>
    </PlayheadLayer>
  </Tracks>
)

const Page = () => (
  <App>
    <GlobalStyle />
    <Windows>
      <TitleBar>
        <AeLogo $size={16}>Ae</AeLogo>
        <WindowTitle>Adobe After Effects 2022 - C:\Users\44779\Desktop\tony x steve.aep *</WindowTitle>
        <WindowButton aria-label="Minimize"><Icon name="minimize" /></WindowButton>
        <WindowButton aria-label="Restore"><Icon name="restore" /></WindowButton>
        <WindowButton aria-label="Close"><Icon name="windowClose" /></WindowButton>
      </TitleBar>
      <MenuBar>
        {menus.map(name => <button key={name}>{name}</button>)}
      </MenuBar>
    </Windows>
    <MainTools />
    <Workspace>
      <EffectControls />
      <Composition />
      <SidePanels />
    </Workspace>
    <Timeline>
      <Tabs $height={28} $bottom={3}>
        <Space $width={29} />
        <Tab>Render Queue</Tab>
        <Space $width={38} />
        <Tab $active>
          <Icon name="close" />
          <Space $width={7} />
          <Swatch $color="#a8926e" />
          <Space $width={12} />
          Comp 1
          <Space $width={9} />
          <Icon name="menu" />
        </Tab>
      </Tabs>
      <TimelineBody>
        <Layers />
        <TimeTracks />
        <Gutter>
          <Icon name="markerBin" />
          <Icon name="compButton" />
        </Gutter>
      </TimelineBody>
      <TimelineFoot>
        <Tool $width={19} $color={blue} aria-label="Layer switches"><Icon name="layers" /></Tool>
        <Tool $width={19} aria-label="Transfer controls"><Icon name="overlap" size={12} /></Tool>
        <Tool $width={19} aria-label="In and out"><Icon name="brackets" size={12} /></Tool>
        <Tool $width={19} aria-label="Render time"><Icon name="snail" size={12} /></Tool>
        <RenderTime>Frame Render Time:<b>749ms</b></RenderTime>
        <ToggleButton>Toggle Switches / Modes</ToggleButton>
        <Icon name="hillSmall" />
        <ZoomSlider type="range" defaultValue="0" aria-label="Timeline zoom" />
        <Icon name="hillBig" />
      </TimelineFoot>
    </Timeline>
    <Taskbar>
      <StartButton aria-label="Start"><Icon name="windows" /></StartButton>
      <TaskSearch>
        <Icon name="taskSearch" />
        <input placeholder="Type here to search" aria-label="Type here to search" />
      </TaskSearch>
      <TaskButton aria-label="Cortana"><Icon name="cortana" /></TaskButton>
      <TaskButton aria-label="Task view"><Icon name="taskView" /></TaskButton>
      <Space $width={3} />
      <TaskButton $running aria-label="File Explorer"><Icon name="folder" /></TaskButton>
      <TaskButton $running aria-label="Chrome"><Icon name="chrome" /></TaskButton>
      <TaskButton $current aria-label="After Effects"><AeLogo $size={22}>Ae</AeLogo></TaskButton>
      <Space />
      <Weather>
        <Icon name="weather" />
        <span>13°C</span>
        <span>Partly sunny</span>
      </Weather>
      <Space $width={11} />
      <TrayButton aria-label="Hidden icons"><Icon name="up" /></TrayButton>
      <TrayButton aria-label="Meet now"><Icon name="meet" /></TrayButton>
      <DateTime>14:55<br />13/03/2022</DateTime>
      <TrayButton $width={44} aria-label="Notifications"><Icon name="notice" /></TrayButton>
      <Space $width={12} />
    </Taskbar>
  </App>
)

export default Page
